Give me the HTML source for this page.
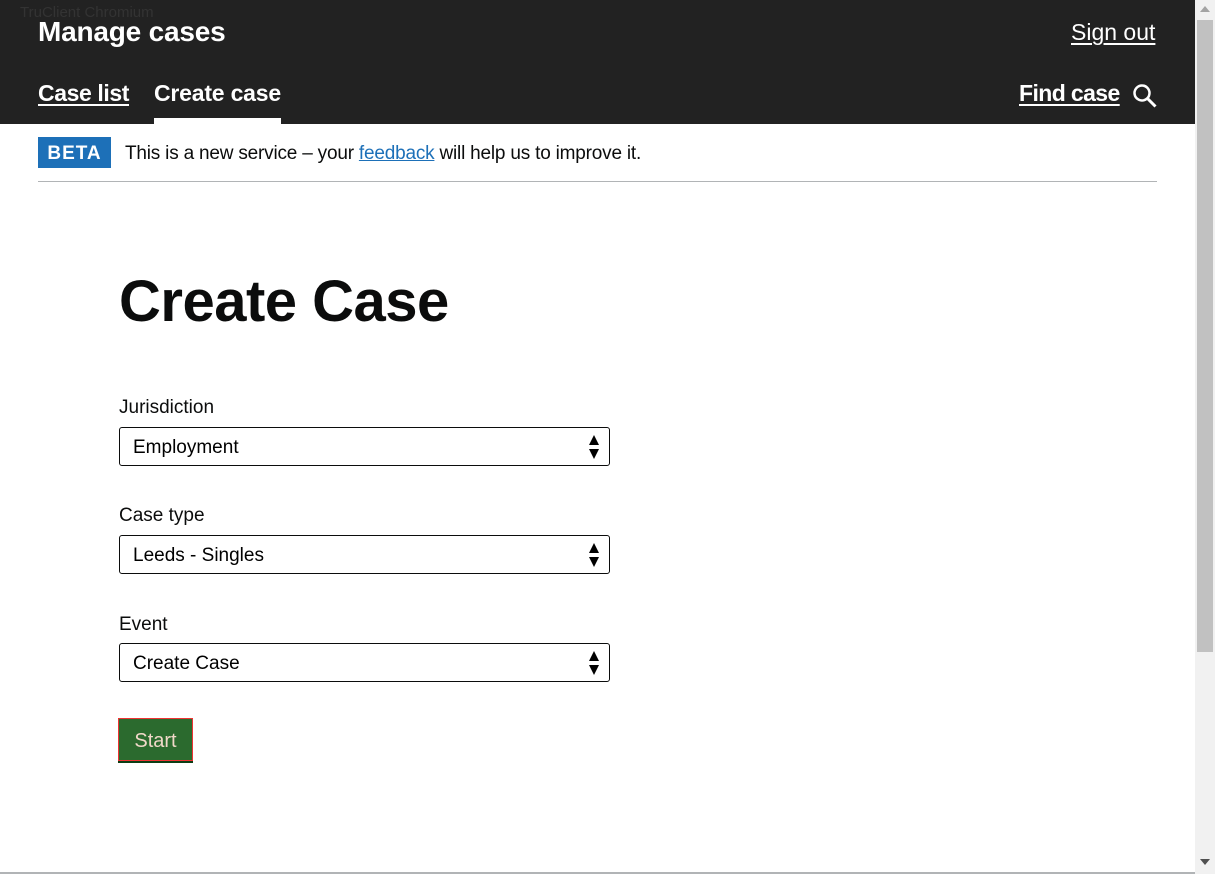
<!DOCTYPE html>
<html><head><style>
body{margin:0;width:1215px;height:874px;overflow:hidden;background:#fff;font-family:"Liberation Sans",sans-serif;position:relative}
.hdr{position:absolute;left:0;top:0;width:1195px;height:124px;background:#222}
.a{position:absolute;color:#fff;font-weight:bold;white-space:nowrap}
.u{text-decoration:underline;text-decoration-thickness:2px;text-underline-offset:3px}
.tru{position:absolute;left:20px;top:4px;font-size:15px;color:#333}
.sb{position:absolute;left:1195px;top:0;width:20px;height:874px;background:#f1f1f1}
.th{position:absolute;left:2px;top:20px;width:16px;height:632px;background:#c1c1c1}
.lbl{position:absolute;left:119px;font-size:19px;color:#0b0c0c}
.sel{position:absolute;left:119px;width:489px;height:37px;border:1px solid #0b0c0c;border-radius:3px;font-size:19px;line-height:39px;box-sizing:content-box}
.sel span{position:absolute;left:13px}
.sel svg{position:absolute;right:10px;top:7px}
</style></head><body>
<div class="hdr">
<div class="a" style="left:38px;top:16px;font-size:28px;letter-spacing:-0.2px">Manage cases</div>
<div class="a u" style="left:1071px;top:19px;font-size:23px;font-weight:normal">Sign out</div>
<div class="a u" style="left:38px;top:80px;font-size:23px;letter-spacing:-0.4px">Case list</div>
<div class="a" style="left:154px;top:80px;font-size:23px;letter-spacing:-0.2px">Create case</div>
<div style="position:absolute;left:154px;top:118px;width:127px;height:6px;background:#fff"></div>
<div class="a u" style="left:1019px;top:80px;font-size:23px;letter-spacing:-0.6px">Find case</div>
<svg style="position:absolute;left:1132px;top:83px" width="26" height="26" viewBox="0 0 26 26"><circle cx="10" cy="10" r="7.5" fill="none" stroke="#fff" stroke-width="2.5"/><line x1="15.5" y1="15.5" x2="23.5" y2="23.5" stroke="#fff" stroke-width="3"/></svg>
</div>
<div class="tru">TruClient Chromium</div>
<div style="position:absolute;left:38px;top:137px;width:73px;height:31px;background:#1d70b8;color:#fff;font-weight:bold;font-size:19px;line-height:33px;text-align:center;letter-spacing:1px">BETA</div>
<div style="position:absolute;left:125px;top:143px;font-size:19px;color:#0b0c0c;letter-spacing:-0.2px">This is a new service – your <span style="color:#1d70b8;text-decoration:underline">feedback</span> will help us to improve it.</div>
<div style="position:absolute;left:38px;top:181px;width:1119px;height:1px;background:#b1b4b6"></div>
<div style="position:absolute;left:119px;top:268px;font-size:58px;font-weight:bold;color:#0b0c0c;letter-spacing:-0.5px">Create Case</div>
<div class="lbl" style="top:397px">Jurisdiction</div>
<div class="sel" style="top:427px"><span>Employment</span><svg width="10" height="24" viewBox="0 0 10 24"><path d="M0 10L5 0L10 10ZM0 14L5 24L10 14Z"/></svg></div>
<div class="lbl" style="top:505px">Case type</div>
<div class="sel" style="top:535px"><span>Leeds - Singles</span><svg width="10" height="24" viewBox="0 0 10 24"><path d="M0 10L5 0L10 10ZM0 14L5 24L10 14Z"/></svg></div>
<div class="lbl" style="top:614px">Event</div>
<div class="sel" style="top:643px"><span>Create Case</span><svg width="10" height="24" viewBox="0 0 10 24"><path d="M0 10L5 0L10 10ZM0 14L5 24L10 14Z"/></svg></div>
<div style="position:absolute;left:118px;top:718px;width:73px;height:41px;background:#2b6a2e;border:1px solid #e33;box-shadow:0 2px 0 #0b3d13;color:#f0d8c8;font-size:20px;line-height:45px;text-align:center">Start</div>
<div style="position:absolute;left:0;top:872px;width:1195px;height:2px;background:#b1b4b6"></div>
<div class="sb"><div class="th"></div>
<svg style="position:absolute;left:5px;top:6px" width="10" height="6"><path d="M0 6L5 0L10 6Z" fill="#a3a3a3"/></svg>
<svg style="position:absolute;left:5px;top:859px" width="10" height="6"><path d="M0 0L5 6L10 0Z" fill="#505050"/></svg></div>
</body></html>
